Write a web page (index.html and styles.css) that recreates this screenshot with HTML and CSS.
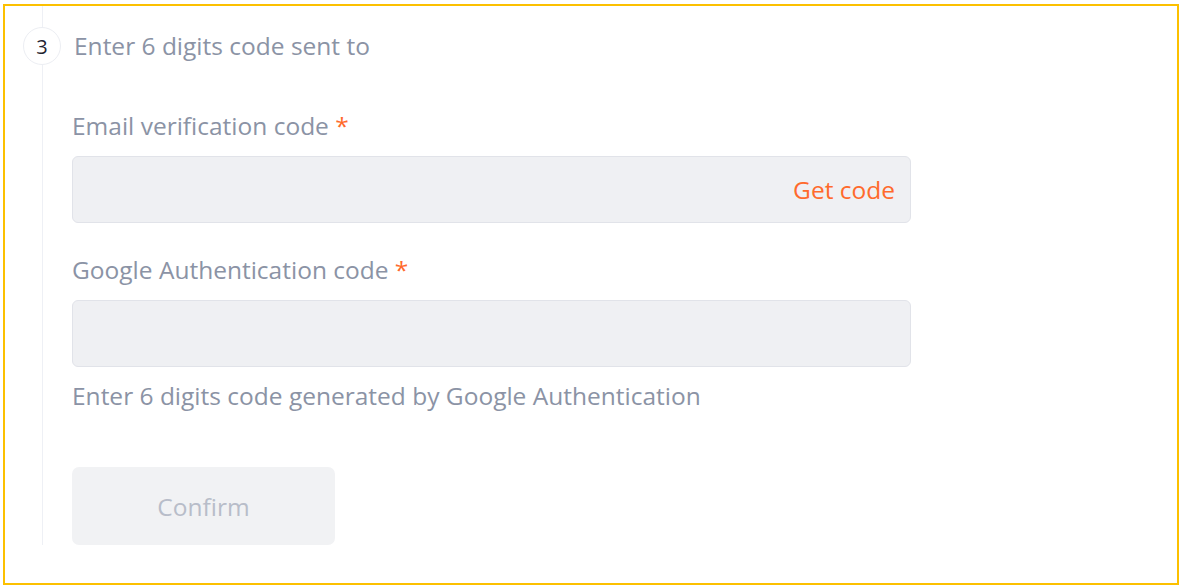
FILE: index.html
```html
<!DOCTYPE html>
<html>
<head>
<meta charset="utf-8">
<link rel="stylesheet" href="styles.css">
</head>
<body>
<div class="frame">
  <div class="step">
    <div class="rail">
      <div class="rail-top"></div>
      <div class="badge">3</div>
      <div class="rail-line"></div>
    </div>
    <div class="content">
      <div class="title">Enter 6 digits code sent to</div>
      <div class="field">
        <div class="label">Email verification code <span class="req">*</span></div>
        <div class="input"><span class="get">Get code</span></div>
      </div>
      <div class="field">
        <div class="label">Google Authentication code <span class="req">*</span></div>
        <div class="input"></div>
        <div class="help">Enter 6 digits code generated by Google Authentication</div>
      </div>
      <button class="confirm">Confirm</button>
    </div>
  </div>
</div>
</body>
</html>
```

FILE: styles.css
```css
* { box-sizing: border-box; }
html, body { margin: 0; padding: 0; background: #fff; }
body { font-family: "Open Sans", "Noto Sans", sans-serif; }
.frame {
  margin: 4px 3px 3px 3px;
  height: 581px;
  border: 2px solid #fcc000;
  padding: 0 0 0 18px;
}
.step { display: flex; height: 539px; }
.rail { width: 38px; display: flex; flex-direction: column; align-items: center; }
.rail-top { width: 1px; height: 21px; background: #eef0f5; }
.badge {
  width: 38px; height: 38px; border-radius: 50%;
  border: 1px solid #eceef3;
  display: flex; align-items: center; justify-content: center;
  font-size: 20px; color: #1f2430;
}
.rail-line { width: 1px; flex: 1; background: #eef0f5; }
.content { margin-left: 11px; display: flex; flex-direction: column; width: 839px; }
.title { font-size: 24.5px; color: #8b93a5; line-height: 32px; margin-top: 24px; margin-left: 2px; }
.field { margin-top: 48px; }
.field + .field { margin-top: 31px; }
.label { font-size: 24.5px; color: #8b93a5; line-height: 32px; }
.req { color: #ff6a2c; }
.input {
  margin-top: 14px;
  height: 67px;
  background: #eff0f3;
  border: 1px solid #e1e3e9;
  border-radius: 6px;
  display: flex; align-items: center; justify-content: flex-end;
  padding-right: 15px;
}
.get { font-size: 24.5px; color: #ff6a2c; }
.help { font-size: 24.5px; color: #8b93a5; line-height: 32px; margin-top: 13px; }
.confirm {
  margin-top: 55px;
  width: 263px; height: 78px;
  border: none; border-radius: 7px;
  background: #f1f2f4;
  font-family: inherit; font-size: 24.5px; color: #b8bdc9;
  padding: 0;
}
```
